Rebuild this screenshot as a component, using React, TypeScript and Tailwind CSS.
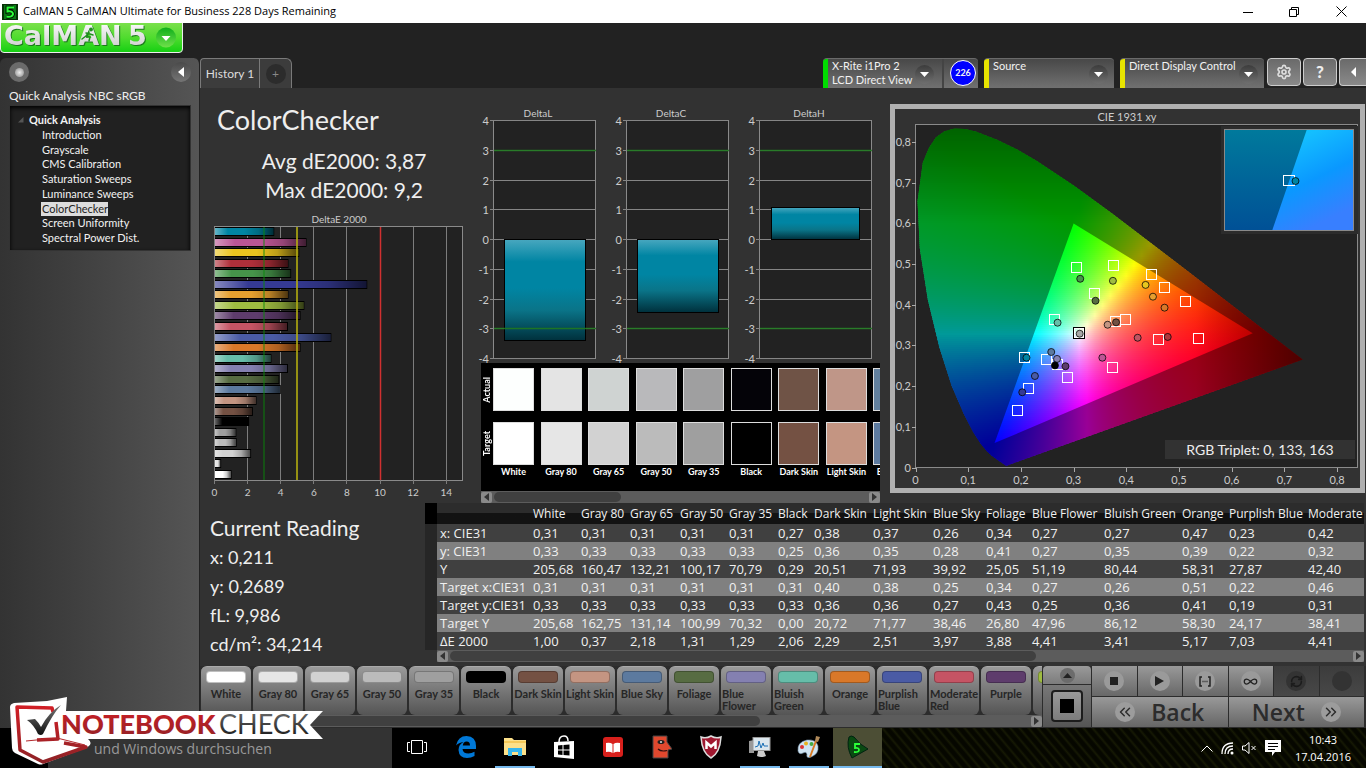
import type { ReactNode } from "react";
import clsx from "clsx";
import { ChevronsLeft, ChevronsRight, Infinity as InfinityIcon, RefreshCw, Settings } from "lucide-react";

// Workflow pages in the sidebar
const pages = [
  "Introduction",
  "Grayscale",
  "CMS Calibration",
  "Saturation Sweeps",
  "Luminance Sweeps",
  "ColorChecker",
  "Screen Uniformity",
  "Spectral Power Dist.",
];

// DeltaE per patch, top to bottom
const deltaE = [
  { color: "#0085a3", value: 3.58 },
  { color: "#bb5695", value: 5.53 },
  { color: "#eac41f", value: 5.09 },
  { color: "#af2f3a", value: 4.44 },
  { color: "#46944a", value: 4.6 },
  { color: "#353a94", value: 9.2 },
  { color: "#e6a02f", value: 4.44 },
  { color: "#9fbc41", value: 5.4 },
  { color: "#5e3c6c", value: 5.17 },
  { color: "#c55464", value: 4.41 },
  { color: "#4a5ba5", value: 7.03 },
  { color: "#d97829", value: 5.17 },
  { color: "#66bda9", value: 3.41 },
  { color: "#8480b1", value: 4.41 },
  { color: "#576c42", value: 3.88 },
  { color: "#5c7a9f", value: 3.97 },
  { color: "#c49582", value: 2.51 },
  { color: "#745143", value: 2.29 },
  { color: "#000000", value: 2.06 },
  { color: "#9f9f9f", value: 1.29 },
  { color: "#bbbbbb", value: 1.31 },
  { color: "#d2d2d2", value: 2.18 },
  { color: "#e6e6e6", value: 0.37 },
  { color: "#ffffff", value: 1.0 },
];

const swatches = [
  { name: "White", actual: "#fdfffe", target: "#ffffff" },
  { name: "Gray 80", actual: "#e4e4e4", target: "#e6e6e6" },
  { name: "Gray 65", actual: "#cfd3d2", target: "#d2d2d2" },
  { name: "Gray 50", actual: "#b9b9bb", target: "#bbbbbb" },
  { name: "Gray 35", actual: "#9f9fa0", target: "#9f9f9f" },
  { name: "Black", actual: "#040308", target: "#000000" },
  { name: "Dark Skin", actual: "#6f5346", target: "#745143" },
  { name: "Light Skin", actual: "#bf9688", target: "#c49582" },
  { name: "Blue Sky", actual: "#62809e", target: "#5c7a9f" },
];

const columns = [
  { name: "White", width: 48, values: ["0,31", "0,33", "205,68", "0,31", "0,33", "205,68", "1,00"] },
  { name: "Gray 80", width: 49, values: ["0,31", "0,33", "160,47", "0,31", "0,33", "162,75", "0,37"] },
  { name: "Gray 65", width: 50, values: ["0,31", "0,33", "132,21", "0,31", "0,33", "131,14", "2,18"] },
  { name: "Gray 50", width: 49, values: ["0,31", "0,33", "100,17", "0,31", "0,33", "100,99", "1,31"] },
  { name: "Gray 35", width: 49, values: ["0,31", "0,33", "70,79", "0,31", "0,33", "70,32", "1,29"] },
  { name: "Black", width: 36, values: ["0,27", "0,25", "0,29", "0,31", "0,33", "0,00", "2,06"] },
  { name: "Dark Skin", width: 59, values: ["0,38", "0,36", "20,51", "0,40", "0,36", "20,72", "2,29"] },
  { name: "Light Skin", width: 60, values: ["0,37", "0,35", "71,93", "0,38", "0,36", "71,77", "2,51"] },
  { name: "Blue Sky", width: 53, values: ["0,26", "0,28", "39,92", "0,25", "0,27", "38,46", "3,97"] },
  { name: "Foliage", width: 46, values: ["0,34", "0,41", "25,05", "0,34", "0,43", "26,80", "3,88"] },
  { name: "Blue Flower", width: 72, values: ["0,27", "0,27", "51,19", "0,27", "0,25", "47,96", "4,41"] },
  { name: "Bluish Green", width: 78, values: ["0,27", "0,35", "80,44", "0,26", "0,36", "86,12", "3,41"] },
  { name: "Orange", width: 47, values: ["0,47", "0,39", "58,31", "0,51", "0,41", "58,30", "5,17"] },
  { name: "Purplish Blue", width: 79, values: ["0,23", "0,22", "27,87", "0,22", "0,19", "24,17", "7,03"] },
  { name: "Moderate", width: 60, values: ["0,42", "0,32", "42,40", "0,46", "0,31", "38,41", "4,41"] },
];

const rowLabels = ["x: CIE31", "y: CIE31", "Y", "Target x:CIE31", "Target y:CIE31", "Target Y", "ΔE 2000"];

const patches = [
  { name: "White", color: "#ffffff" },
  { name: "Gray 80", color: "#e6e6e6" },
  { name: "Gray 65", color: "#d2d2d2" },
  { name: "Gray 50", color: "#bbbbbb" },
  { name: "Gray 35", color: "#9f9f9f" },
  { name: "Black", color: "#000000" },
  { name: "Dark Skin", color: "#745143" },
  { name: "Light Skin", color: "#c49582" },
  { name: "Blue Sky", color: "#5c7a9f" },
  { name: "Foliage", color: "#576c42" },
  { name: "Blue Flower", color: "#8480b1" },
  { name: "Bluish Green", color: "#66bda9" },
  { name: "Orange", color: "#d97829" },
  { name: "Purplish Blue", color: "#4a5ba5" },
  { name: "Moderate Red", color: "#c55464" },
  { name: "Purple", color: "#5e3c6c" },
  { name: "", color: "#9fbc41" },
];

// Spectral locus, CIE 1931
const locus = [
  [0.1741, 0.005], [0.1714, 0.0051], [0.1689, 0.0069], [0.1644, 0.0109], [0.1566, 0.0177],
  [0.144, 0.0297], [0.1355, 0.0399], [0.1241, 0.0578], [0.1096, 0.0868], [0.0913, 0.1327],
  [0.0687, 0.2007], [0.0454, 0.295], [0.0235, 0.4127], [0.0082, 0.5384], [0.0039, 0.6548],
  [0.0139, 0.7502], [0.0256, 0.786], [0.0389, 0.812], [0.055, 0.827], [0.0743, 0.8338],
  [0.094, 0.8325], [0.1142, 0.8262], [0.1547, 0.8059], [0.1929, 0.7816], [0.2296, 0.7543],
  [0.3016, 0.6923], [0.3731, 0.6245], [0.4441, 0.5547], [0.5125, 0.4866], [0.5752, 0.4242],
  [0.627, 0.3725], [0.6658, 0.334], [0.6915, 0.3083], [0.719, 0.2809], [0.7347, 0.2653],
];

const gamut = [[0.64, 0.33], [0.3, 0.6], [0.15, 0.06]];

const targets = [
  [0.304, 0.492], [0.374, 0.497], [0.446, 0.476], [0.472, 0.443], [0.511, 0.41], [0.338, 0.43],
  [0.262, 0.365], [0.398, 0.366], [0.378, 0.36], [0.46, 0.315], [0.536, 0.319], [0.206, 0.272],
  [0.247, 0.267], [0.268, 0.255], [0.372, 0.248], [0.288, 0.223], [0.214, 0.195], [0.192, 0.142],
];

const readings = [
  { x: 0.312, y: 0.464, color: "#46944a" },
  { x: 0.374, y: 0.459, color: "#9fbc41" },
  { x: 0.436, y: 0.449, color: "#e7c71f" },
  { x: 0.45, y: 0.42, color: "#e6a02f" },
  { x: 0.472, y: 0.393, color: "#d97829" },
  { x: 0.341, y: 0.41, color: "#576c42" },
  { x: 0.269, y: 0.356, color: "#66bda9" },
  { x: 0.364, y: 0.351, color: "#c49582" },
  { x: 0.38, y: 0.357, color: "#745143" },
  { x: 0.421, y: 0.319, color: "#c15463" },
  { x: 0.478, y: 0.321, color: "#af363c" },
  { x: 0.354, y: 0.27, color: "#bb5695" },
  { x: 0.21, y: 0.27, color: "#0085a3" },
  { x: 0.257, y: 0.284, color: "#5c7a9f" },
  { x: 0.268, y: 0.267, color: "#8480b1" },
  { x: 0.284, y: 0.249, color: "#5e3c6c" },
  { x: 0.264, y: 0.251, color: "#000000" },
  { x: 0.226, y: 0.225, color: "#4a5ba5" },
  { x: 0.202, y: 0.185, color: "#353a94" },
  { x: 0.311, y: 0.329, color: "#a8a8a8" },
];

const cieX = (x: number) => 20.5 + x * 527;
const cieY = (y: number) => 358.5 - y * 406.7;
const toPoints = (list: number[][]) => list.map(([x, y]) => `${cieX(x)},${cieY(y)}`).join(" ");
const toPath = (list: number[][]) => `M${list.map(([x, y]) => `${cieX(x)} ${cieY(y)}`).join("L")}Z`;

// Chromaticity to a fully bright rgb colour, fading out at the far red and green ends
function chromaColor(x: number, y: number) {
  const X = x / y;
  const Z = (1 - x - y) / y;
  const rgb = [
    3.2406 * X - 1.5372 - 0.4986 * Z,
    -0.9689 * X + 1.8758 + 0.0415 * Z,
    0.0557 * X - 0.204 + 1.057 * Z,
  ].map((v) => Math.max(0, v));
  const max = Math.max(...rgb);
  const fade = (1 - 2.4 * Math.max(0, x - 0.53)) * (1 - 1.5 * Math.max(0, y - 0.6));
  return `rgb(${rgb.map((v) => Math.round((v / max) * 255 * fade)).join(",")})`;
}

const cieRows = Array.from({ length: 172 }, (_, i) => {
  const top = 16 + i * 2;
  const y = Math.max(0.002, (358.5 - top - 1) / 406.7);
  const stops = Array.from({ length: 51 }, (_, s) => chromaColor((s / 50) * 0.74, y));
  return { top, stops };
});

function Scrollbar({ className, thumb }: { className?: string; thumb: string }) {
  return (
    <div className={clsx("flex h-3 items-center bg-[#5c5c5c]", className)}>
      <button aria-label="Scroll left" className="flex h-[11px] w-[11px] shrink-0 items-center justify-center rounded-xs bg-[#8a8a8a]">
        <svg width="5" height="8" viewBox="0 0 5 8"><path d="M5 0v8L0 4z" fill="#333" /></svg>
      </button>
      <div className="mx-0.5 h-[10px] flex-1">
        <div className={clsx("h-full rounded-full bg-[#404040]", thumb)} />
      </div>
      <button aria-label="Scroll right" className="flex h-[11px] w-[11px] shrink-0 items-center justify-center rounded-xs bg-[#8a8a8a]">
        <svg width="5" height="8" viewBox="0 0 5 8"><path d="M0 0v8l5-4z" fill="#333" /></svg>
      </button>
    </div>
  );
}

function TitleBar() {
  return (
    <div className="flex h-[23px] shrink-0 items-center bg-white pl-0.5 font-['Open_Sans',sans-serif] text-[11px] text-black">
      <svg width="16" height="16" viewBox="0 0 16 16">
        <rect width="16" height="16" fill="#063006" />
        <rect x="2" y="1" width="12" height="14" fill="#0a7a16" />
        <path d="M11.500 3.500H5.500v4q5-1 5.500 2.500-.5 3.500-6.500 2.500" fill="none" stroke="#010" strokeWidth="4" />
        <path d="M12 3.500H5.500v4q5-1 5.500 2.500-.5 3.500-6.500 2.500" fill="none" stroke="#2cff3a" strokeWidth="2" />
      </svg>
      <span className="flex-1 pl-[5px]">CalMAN 5 CalMAN Ultimate for Business 228 Days Remaining</span>
      <button aria-label="Minimize" className="flex h-full w-[46px] items-center justify-center">
        <svg width="10" height="10" viewBox="0 0 10 10"><path d="M0 5.500h10" stroke="#000" /></svg>
      </button>
      <button aria-label="Restore" className="flex h-full w-[46px] items-center justify-center">
        <svg width="10" height="10" viewBox="0 0 10 10" fill="none" stroke="#000"><path d="M.5 2.500h7v7h-7zM2.500 2.500v-2h7v7h-2" /></svg>
      </button>
      <button aria-label="Close" className="flex h-full w-[49px] items-center justify-center">
        <svg width="11" height="11" viewBox="0 0 11 11" fill="none" stroke="#000"><path d="M.5.5l10 10M10.500.5l-10 10" /></svg>
      </button>
    </div>
  );
}

function Logo() {
  return (
    <button aria-label="CalMAN 5 menu" className="block h-[30px] w-[183px]">
      <svg width="183" height="30" viewBox="0 0 183 30" className="overflow-visible">
        <defs>
          <linearGradient id="logoBg" x1="0" y1="0" x2="0" y2="1">
            <stop offset="0" stopColor="#7be04c" />
            <stop offset=".5" stopColor="#4fdc2e" />
            <stop offset="1" stopColor="#14cf12" />
          </linearGradient>
          <linearGradient id="silver" x1="0" y1="0" x2="0" y2="1">
            <stop offset="0" stopColor="#fff" />
            <stop offset="1" stopColor="#c9c9c9" />
          </linearGradient>
          <linearGradient id="logoBtn" x1="0" y1="0" x2="0" y2="1">
            <stop offset="0" stopColor="#0fae1b" />
            <stop offset="1" stopColor="#6fe04a" />
          </linearGradient>
        </defs>
        <path d="M.5 0v26q0 3.500 3.500 3.500h175q3.500 0 3.500-3.500V0z" fill="url(#logoBg)" />
        <path d="M.5 0v26q0 3.500 3.500 3.500h175q3.500 0 3.500-3.500V0" fill="none" stroke="#eee" />
        <g fontFamily="DejaVu Sans" fontWeight="bold" fontSize="27" fill="url(#silver)" className="drop-shadow-[1px_1px_0px_#1b7a1b]">
          <text x="4" y="22">CalMAN</text>
          <text x="128" y="22">5</text>
        </g>
        <g fill="none" stroke="#1f8f1f" strokeWidth="1.500" strokeLinecap="round">
          <circle cx="91" cy="6.500" r="1.200" fill="#1f8f1f" />
          <path d="M89 9l-3 4 4 1-1 4M86 13l-4 3M86 10l4 1 3 1" />
        </g>
        <circle cx="166" cy="14.500" r="10" fill="url(#logoBtn)" />
        <path d="M161.500 13h9l-4.500 5z" fill="#fff" />
      </svg>
    </button>
  );
}

function Sidebar() {
  return (
    <aside className="w-[200px] shrink-0 rounded-t-md border-r border-[#222] bg-linear-to-r from-[#333] to-[#555] pt-1 pr-2 pl-[9px]">
      <div className="flex items-center justify-between">
        <button aria-label="Record" className="flex h-5 w-5 items-center justify-center rounded-full bg-[#6b6b6b]">
          <span className="h-[9px] w-[9px] rounded-full bg-radial from-[#eee] to-[#888]" />
        </button>
        <button aria-label="Collapse sidebar" className="flex h-5 w-5 items-center justify-center rounded-full bg-linear-to-b from-[#4a4a4a] to-[#757575]">
          <svg width="6" height="10" viewBox="0 0 6 10"><path d="M6 0v10L0 5z" fill="#fff" /></svg>
        </button>
      </div>
      <p className="mt-[5px] text-[12px] leading-[18px] text-[#eee]">Quick Analysis NBC sRGB</p>
      <nav className="h-[146px] border border-[#333] bg-[#212121] pt-1.5 text-[11px] text-[#f2f2f2] inset-shadow-sm inset-shadow-black">
        <p className="flex items-center gap-[5px] pl-2 leading-[16px] font-bold">
          <svg width="6" height="6" viewBox="0 0 6 6"><path d="M5.500 0v5.500H0z" fill="#555" /></svg>
          Quick Analysis
        </p>
        <ul className="flex h-[117px] flex-col justify-between pl-8">
          {pages.map((page) => (
            <li key={page} className="leading-[14px]">
              <a href="#" className={clsx(page === "ColorChecker" && "-ml-px inline-block bg-[#dcdcdc] pl-px text-[#222]")}>
                {page}
              </a>
            </li>
          ))}
        </ul>
      </nav>
    </aside>
  );
}

function RoundArrow() {
  return (
    <span className="mt-1.5 flex h-[19px] w-[19px] shrink-0 items-center justify-center rounded-full bg-linear-to-b from-[#3c3c3c] to-[#707070]">
      <svg width="9" height="5" viewBox="0 0 9 5"><path d="M0 0h9L4.500 5z" fill="#fff" /></svg>
    </span>
  );
}

function TopBar() {
  const tab = "flex h-[30px] shrink-0 overflow-hidden rounded-t border-t border-[#6a6a6a] bg-linear-to-b from-[#484848] to-[#717171] text-left text-[11px] leading-[14px] whitespace-nowrap text-[#f2f2f2]";
  const tool = "flex h-[28px] w-[34px] items-center justify-center rounded border border-[#ccc] bg-linear-to-b from-[#6a6a6a] to-[#8a8a8a]";
  return (
    <div className="flex h-[30px] shrink-0 items-end bg-[#222]">
      <button className="h-[30px] w-[59px] rounded-tl border-t border-l border-[#7a7a7a] bg-[#3c3c3c] text-[12px] text-[#ddd]">
        History 1
      </button>
      <button aria-label="Add history" className="flex h-[30px] w-[33px] items-center justify-center rounded-tr-md border border-b-0 border-[#7a7a7a] bg-[#3c3c3c]">
        <span className="flex h-5 w-5 items-center justify-center rounded-full bg-[#2c2c2c] text-[12px] text-[#888]">+</span>
      </button>
      <div className="flex-1" />
      <button className={clsx(tab, "w-[155px]")}>
        <span className="h-full w-[5px] bg-[#00dd00]" />
        <span className="flex-1 pl-1">X-Rite i1Pro 2<br />LCD Direct View</span>
        <RoundArrow />
        <span className="mr-1.5 ml-2 h-full border-l-2 border-[#444]" />
        <span className="mt-px mr-0.5 flex h-[26px] w-[26px] shrink-0 items-center justify-center rounded-full border border-white bg-[#0000ff] text-[9px] font-bold">226</span>
      </button>
      <button className={clsx(tab, "ml-1.5 w-[130px] pr-1.5")}>
        <span className="h-full w-[5px] bg-[#e8e400]" />
        <span className="flex-1 pl-1">Source</span>
        <RoundArrow />
      </button>
      <button className={clsx(tab, "ml-1.5 w-[144px] pr-1.5")}>
        <span className="h-full w-[5px] bg-[#e8e400]" />
        <span className="flex-1 pl-1">Direct Display Control</span>
        <RoundArrow />
      </button>
      <div className="ml-[3px] flex gap-0.5 self-start">
        <button aria-label="Settings" className={tool}>
          <Settings size={16} color="#ddd" strokeWidth={2.5} />
        </button>
        <button aria-label="Help" className={clsx(tool, "text-[17px] font-black text-[#eee]")}>?</button>
        <button aria-label="Collapse" className="flex h-[28px] w-[27px] items-center justify-center rounded-l border border-r-0 border-[#ccc] bg-linear-to-b from-[#6a6a6a] to-[#8a8a8a]">
          <svg width="5" height="10" viewBox="0 0 5 10"><path d="M5 0v10L0 5z" fill="#fff" /></svg>
        </button>
      </div>
    </div>
  );
}

function DeltaEChart() {
  const unit = 16.55;
  return (
    <svg width="264" height="290" viewBox="0 0 264 290" fontFamily="Lato" className="text-[10px]">
      <defs>
        <linearGradient id="shadeH">
          <stop offset="0" stopColor="#fff" stopOpacity=".4" />
          <stop offset=".22" stopColor="#fff" stopOpacity="0" />
          <stop offset=".5" stopColor="#000" stopOpacity="0" />
          <stop offset=".75" stopColor="#000" stopOpacity=".2" />
          <stop offset="1" stopColor="#000" stopOpacity=".65" />
        </linearGradient>
      </defs>
      <text x="131" y="13" textAnchor="middle" fill="#ccc">DeltaE 2000</text>
      <rect x="6.500" y="16.500" width="248" height="254" fill="#222" stroke="#8a8a8a" />
      {[0, 2, 4, 6, 8, 10, 12, 14].map((v) => (
        <g key={v}>
          <path d={`M${Math.round(v * unit) + 6.5} 17v257`} stroke="#7d7d7d" />
          <text x={v * unit + 6.5} y="286" textAnchor="middle" fill="#ccc">{v}</text>
        </g>
      ))}
      {deltaE.map((bar, i) => (
        <g key={i} transform={`translate(7 ${Math.round(17 + i * 10.56)})`}>
          <rect width={bar.value * unit} height="9" fill="#000" />
          <rect y="1" width={bar.value * unit - 1} height="7" fill={bar.color} />
          <rect y="1" width={bar.value * unit - 1} height="7" fill="url(#shadeH)" />
        </g>
      ))}
      <path d="M56 17v253" stroke="#0a8a0a" strokeOpacity=".6" strokeWidth="1.500" />
      <path d="M89 17v253" stroke="#b4ae10" strokeOpacity=".8" strokeWidth="2" />
      <path d="M172.500 17v253" stroke="#d03030" strokeWidth="1.500" />
    </svg>
  );
}

type DeltaChartProps = { title: string; value: number; plot: number; width: number };

function DeltaChart({ title, value, plot, width }: DeltaChartProps) {
  const y = (v: number) => Math.round((4 - v) * 29.75) + 16.5;
  const top = value > 0 ? y(value) : y(0);
  const height = Math.abs(y(value) - y(0));
  return (
    <svg width={width} height="259" viewBox={`0 0 ${width} 259`} fontFamily="Lato" className="overflow-visible text-[11px]">
      <defs>
        <linearGradient id="shadeV" x1="0" y1="0" x2="0" y2="1">
          <stop offset="0" stopColor="#48a7bf" />
          <stop offset=".22" stopColor="#0085a3" />
          <stop offset=".48" stopColor="#0085a3" />
          <stop offset=".7" stopColor="#0a7488" />
          <stop offset="1" stopColor="#00303c" />
        </linearGradient>
      </defs>
      <text x={13 + plot / 2 - 6} y="13" textAnchor="middle" fontSize="10" fill="#ccc">{title}</text>
      <rect x="13.500" y="16.500" width={plot} height="238" fill="#222" stroke="#8a8a8a" />
      {[4, 3, 2, 1, 0, -1, -2, -3, -4].map((v) => (
        <g key={v}>
          <path d={`M10 ${y(v)}h${plot + 3}`} stroke="#858585" />
          <text x="9" y={y(v) + 4} textAnchor="end" fill="#ccc">{v}</text>
        </g>
      ))}
      <rect
        x={13.5 + Math.round(plot * 0.105)}
        y={top}
        width={Math.round(plot * 0.79)}
        height={height}
        fill="url(#shadeV)"
        stroke="#000"
      />
      {[3, -3].map((v) => (
        <path key={v} d={`M14 ${y(v)}h${plot}`} stroke="#1f7a1f" strokeWidth="1.500" strokeOpacity=".9" />
      ))}
    </svg>
  );
}

function SwatchPanel() {
  const side = "flex w-3 items-center justify-center text-[9px] font-bold text-white";
  return (
    <div className="ml-px w-[399px]">
      <div className="grid h-[128px] grid-cols-[12px_1fr] grid-rows-[54px_74px] overflow-hidden bg-black">
        <div className={side}><span className="rotate-180 [writing-mode:vertical-rl]">Actual</span></div>
        <div className="grid w-[428px] grid-cols-9 pt-[5px]">
          {swatches.map((s) => (
            <div key={s.name} className="h-[43px] w-[41px] border border-[#ddd]" style={{ backgroundColor: s.actual }} />
          ))}
        </div>
        <div className={clsx(side, "pb-5")}><span className="rotate-180 [writing-mode:vertical-rl]">Target</span></div>
        <div className="grid w-[428px] grid-cols-9 pt-[5px]">
          {swatches.map((s) => (
            <div key={s.name} className="w-[41px]">
              <div className="h-[43px] border border-[#ddd]" style={{ backgroundColor: s.target }} />
              <p className="-mx-1 text-center text-[9px] leading-[14px] font-bold whitespace-nowrap text-white">{s.name}</p>
            </div>
          ))}
        </div>
      </div>
      <Scrollbar thumb="w-[34%]" />
    </div>
  );
}

function CieChart() {
  const edge = toPath(locus);
  const triangle = toPath(gamut);
  return (
    <svg viewBox="0 0 465 379" className="h-full w-full text-[11px]" fontFamily="Lato">
      <defs>
        {cieRows.map((row) => (
          <linearGradient key={row.top} id={`cie${row.top}`}>
            {row.stops.map((color, i) => (
              <stop key={i} offset={i / 50} stopColor={color} />
            ))}
          </linearGradient>
        ))}
        <clipPath id="locus"><polygon points={toPoints(locus)} /></clipPath>
        <linearGradient id="insetDark" x1="0" y1="0" x2="0" y2="1">
          <stop offset="0" stopColor="#007a9c" />
          <stop offset="1" stopColor="#005096" />
        </linearGradient>
        <linearGradient id="insetLight" x1="0" y1="0" x2=".4" y2="1">
          <stop offset="0" stopColor="#00cfff" />
          <stop offset=".2" stopColor="#14beff" />
          <stop offset=".6" stopColor="#0a98ff" />
          <stop offset="1" stopColor="#387fff" />
        </linearGradient>
      </defs>
      <text x="232" y="12" textAnchor="middle" fill="#ccc">CIE 1931 xy</text>
      <rect x="20.500" y="15.500" width="442" height="343" fill="#222" stroke="#8a8a8a" />
      <g clipPath="url(#locus)">
        {cieRows.map((row) => (
          <rect key={row.top} x={cieX(0)} y={row.top} width={0.74 * 527} height="2.500" fill={`url(#cie${row.top})`} />
        ))}
      </g>
      <path d={edge + triangle} fillRule="evenodd" fill="#000" fillOpacity=".4" />
      {[0, 1, 2, 3, 4, 5, 6, 7, 8].map((v) => (
        <g key={v} fill="#ccc" stroke="none">
          <path d={`M${Math.round(cieX(v / 10)) + 0.5} 359v4M17 ${Math.round(cieY(v / 10)) + 0.5}h4`} stroke="#aaa" />
          <text x={cieX(v / 10)} y="375" textAnchor="middle">{v ? `0,${v}` : "0"}</text>
          <text x="16" y={cieY(v / 10) + 4} textAnchor="end">{v ? `0,${v}` : "0"}</text>
        </g>
      ))}
      {targets.map(([x, y], i) => (
        <rect key={i} x={Math.round(cieX(x)) - 4.5} y={Math.round(cieY(y)) - 4.5} width="10" height="10" fill="none" stroke="#fff" />
      ))}
      <rect x={Math.round(cieX(0.31)) - 5.5} y={Math.round(cieY(0.331)) - 5.5} width="11" height="11" fill="none" stroke="#000" />
      <rect x={Math.round(cieX(0.31)) - 4.5} y={Math.round(cieY(0.331)) - 4.5} width="9" height="9" fill="none" stroke="#fff" />
      {readings.map((r) => (
        <circle key={r.color} cx={cieX(r.x) + 0.3} cy={cieY(r.y)} r="3.500" fill={r.color} stroke="#000" strokeOpacity=".75" />
      ))}
      {/* zoomed view of the selected patch */}
      <rect x="326" y="17" width="137" height="108" fill="#2c2c2c" />
      <rect x="329" y="20" width="130" height="102" fill="url(#insetDark)" />
      <path d="M412 20h47v102h-82z" fill="url(#insetLight)" />
      <rect x="329.500" y="20.500" width="129" height="101" fill="none" stroke="#8a8a8a" />
      <rect x="388.500" y="66.500" width="11" height="10" fill="none" stroke="#fff" />
      <circle cx="400.500" cy="72" r="3.500" fill="#0085a3" stroke="#000" strokeOpacity=".75" />
      <rect x="270" y="331" width="190" height="19" fill="#323232" />
      <text x="365" y="346" textAnchor="middle" fontSize="14" fill="#eee">RGB Triplet: 0, 133, 163</text>
    </svg>
  );
}

function CurrentReading() {
  return (
    <section className="w-[225px] shrink-0 pt-2.5 pl-2.5 text-[#eee]">
      <h2 className="text-[21px] leading-[30px]">Current Reading</h2>
      <div className="text-[18px] leading-[29px]">
        <p>x: 0,211</p>
        <p>y: 0,2689</p>
        <p>fL: 9,986</p>
        <p>cd/m²: 34,214</p>
      </div>
    </section>
  );
}

function DataTable() {
  return (
    <section className="mr-0.5 min-w-0 flex-1 overflow-hidden">
      <table className="w-[940px] table-fixed font-['Open_Sans',sans-serif] text-[13px] text-[#f0f0f0]">
        <colgroup>
          <col className="w-3" />
          <col className="w-[93px]" />
          {columns.map((c) => (
            <col key={c.name} style={{ width: c.width }} />
          ))}
        </colgroup>
        <thead>
          <tr className="h-[21px] bg-linear-to-b from-[#2c2c2c] from-50% to-[#121212] to-50% text-left text-[12px] leading-[18px]">
            <td className="bg-black" />
            <td />
            {columns.map((c) => (
              <th key={c.name} scope="col" className="pl-[3px] font-normal whitespace-nowrap">{c.name}</th>
            ))}
          </tr>
        </thead>
        <tbody>
          {rowLabels.map((label, i) => (
            <tr key={label} className={clsx("leading-[18px]", i % 2 ? "bg-[#808080]" : "bg-[#404040]")}>
              <td className="bg-[#262626]" />
              <th scope="row" className="pl-[3px] text-left font-normal whitespace-nowrap">{label}</th>
              {columns.map((c) => (
                <td key={c.name} className="pl-[3px]">{c.values[i]}</td>
              ))}
            </tr>
          ))}
        </tbody>
      </table>
      <Scrollbar className="ml-3" thumb="w-[65%]" />
    </section>
  );
}

function PatchStrip() {
  return (
    <div className="min-w-0 flex-1 overflow-hidden">
      <div className="flex h-[49px] gap-0.5 pl-px">
        {patches.map((p) => (
          <button
            key={p.color}
            aria-label={p.name || "Yellow Green"}
            className="flex w-[50px] shrink-0 flex-col items-center rounded-md border-t border-[#aaa] bg-linear-to-b from-[#9a9a9a] to-[#555] pt-1 text-left text-[11px] leading-[12px] font-bold text-[#262626]"
          >
            <span className="h-3 w-10 shrink-0 rounded border border-black/25" style={{ backgroundColor: p.color }} />
            <span className={clsx("mt-[5px]", p.name.length > 10 && "max-w-12")}>{p.name}</span>
          </button>
        ))}
      </div>
      <Scrollbar thumb="w-[67%]" />
    </div>
  );
}

function ControlCell({ label, off, children }: { label: string; off?: boolean; children?: ReactNode }) {
  return (
    <button
      aria-label={label}
      className={clsx(
        "flex flex-1 items-center justify-center",
        off ? "bg-linear-to-b from-[#3c3c3c] to-[#484848]" : "bg-linear-to-b from-[#999] to-[#686868]",
      )}
    >
      <span className={clsx("flex h-5 w-5 items-center justify-center rounded-full", off ? "bg-[#333]" : "bg-[#9a9a9a]")}>
        {children}
      </span>
    </button>
  );
}

function BottomBar() {
  const big = "flex flex-1 items-center justify-center gap-4 bg-linear-to-b from-[#999] to-[#666] font-['Open_Sans',sans-serif] text-[23px] font-semibold text-[#2c2c2c]";
  return (
    <footer className="flex h-[62px] shrink-0 bg-[#2c2c2c] pb-px">
      <PatchStrip />
      <div className="ml-px flex w-12 flex-col gap-px">
        <button aria-label="Expand" className="flex h-[18px] items-center justify-center rounded-t bg-linear-to-b from-[#9a9a9a] to-[#7c7c7c]">
          <span className="flex h-[15px] w-[15px] items-center justify-center rounded-full bg-[#6c6c6c]">
            <svg width="9" height="5" viewBox="0 0 9 5"><path d="M0 5h9L4.500 0z" fill="#222" /></svg>
          </span>
        </button>
        <button aria-label="Pattern window" className="flex flex-1 items-center justify-center bg-linear-to-b from-[#787878] to-[#555]">
          <span className="flex h-8 w-8 items-center justify-center rounded border-2 border-[#1c1c1c] bg-linear-to-b from-[#999] to-[#7c7c7c]">
            <span className="h-3.5 w-3.5 bg-black" />
          </span>
        </button>
      </div>
      <div className="mr-0.5 ml-px flex w-[272px] flex-col gap-px">
        <div className="flex h-[30px] gap-px">
          <ControlCell label="Stop"><span className="h-2 w-2 bg-[#222]" /></ControlCell>
          <ControlCell label="Play">
            <svg width="9" height="10" viewBox="0 0 9 10"><path d="M0 0v10l9-5z" fill="#222" /></svg>
          </ControlCell>
          <ControlCell label="Read series">
            <svg width="12" height="11" viewBox="0 0 12 11" fill="none" stroke="#222" strokeWidth="1.500"><path d="M3 1H1v9h2M9 1h2v9H9M3.500 5.500h1M5.500 5.500h1M7.500 5.500h1" /></svg>
          </ControlCell>
          <ControlCell label="Read continuously"><InfinityIcon size={15} color="#222" /></ControlCell>
          <ControlCell label="Refresh" off><RefreshCw size={13} color="#1c1c1c" strokeWidth={3} /></ControlCell>
          <ControlCell label="Record" off />
        </div>
        <div className="flex min-h-0 flex-1 gap-px">
          <button className={big}>
            <span className="flex h-5 w-5 items-center justify-center rounded-full bg-[#9c9c9c]"><ChevronsLeft size={18} /></span>
            Back
          </button>
          <button className={big}>
            Next
            <span className="flex h-5 w-5 items-center justify-center rounded-full bg-[#9c9c9c]"><ChevronsRight size={18} /></span>
          </button>
        </div>
      </div>
    </footer>
  );
}

function Watermark() {
  return (
    <svg width="316" height="70" viewBox="0 0 316 70" className="absolute bottom-0.5 left-2.5">
      <defs>
        <linearGradient id="nbRed" x1="0" y1="0" x2="0" y2="1">
          <stop offset="0" stopColor="#d01f26" />
          <stop offset="1" stopColor="#8f2226" />
        </linearGradient>
        <linearGradient id="nbGray" x1="0" y1="0" x2="0" y2="1">
          <stop offset="0" stopColor="#777" />
          <stop offset="1" stopColor="#111" />
        </linearGradient>
      </defs>
      <path d="M4 7l33-2L57 1l-1 14h257l-13 14 13 14H78q6 5-2 9L33 68q-2 1-5 0L5 57q-3-2-3-5L0 11q0-3 4-4z" fill="#fff" />
      <path d="M43 16l-1-4-35-1 3 43 23 12 43-15-22-4M46 26l2 17-21 1" fill="none" stroke="url(#nbRed)" strokeWidth="3.500" strokeLinejoin="round" />
      <path d="M16 45l31-3 28 7" fill="none" stroke="#b3262b" strokeWidth="1" />
      <path d="M17 24l8-1q4 4 6 8Q39 16 51 9q-9 10-18 29-2 2-5 0-4-9-11-14z" fill="url(#nbGray)" />
      <text x="51" y="38" fontFamily="Lato" fontSize="27" fontWeight="900" fill="url(#nbRed)">NOTEBOOK</text>
      <text x="209" y="38" fontFamily="Lato" fontSize="27" fontWeight="400" fill="url(#nbGray)">CHECK</text>
    </svg>
  );
}

function TaskItem({ label, open, active, children }: { label: string; open?: boolean; active?: boolean; children: ReactNode }) {
  return (
    <button aria-label={label} className={clsx("flex w-[49px] flex-col items-center", active && "bg-[#4c4e35]")}>
      <span className="flex flex-1 items-center">{children}</span>
      <span className={clsx("h-0.5", active ? "w-full" : "w-10", open && "bg-[#76b9ed]")} />
    </button>
  );
}

function TaskBar() {
  return (
    <div className="relative flex h-10 shrink-0 bg-black font-['Open_Sans',sans-serif]">
      <div className="w-12" />
      <label className="flex w-[344px] bg-[#333]">
        <span className="sr-only">Search</span>
        <input className="w-full bg-transparent pl-[46px] text-[14px] text-[#999] outline-none" defaultValue="und Windows durchsuchen" />
      </label>
      <TaskItem label="Task view">
        <svg width="20" height="14" viewBox="0 0 20 14" fill="none" stroke="#fff"><path d="M4.500.5h11v13h-11zM3 2.500H.5v9H3M17 2.500h2.500v9H17" /></svg>
      </TaskItem>
      <TaskItem label="Edge">
        <svg width="20" height="22" viewBox="0 0 20 22">
          <path d="M0 9.500Q2 0 10.500 0 20 .5 20 10v3H6.500q.5 4.500 6 4.500 3 0 6-1.700V20q-3.500 2-7.500 2-8 0-8.500-8 0-5.500 5-8Q2.500 6.500 0 9.500zM6.800 9.500h7.200q0-4-3.300-4-3.400 0-3.900 4z" fill="#0078d7" fillRule="evenodd" />
        </svg>
      </TaskItem>
      <TaskItem label="Explorer" open>
        <svg width="22" height="20" viewBox="0 0 22 20">
          <path d="M0 1h8l2 2h12v15H0z" fill="#fce08a" />
          <path d="M0 4h22v2H0z" fill="#f5c95a" />
          <path d="M4 11h14v8h-4v-4H8v4H4z" fill="#35b6ee" />
        </svg>
      </TaskItem>
      <TaskItem label="Store">
        <svg width="22" height="24" viewBox="0 0 22 24">
          <path d="M1 7l20-1v18L1 22z" fill="#fff" />
          <path d="M6 7q0-6 5-6 4 0 4 5" fill="none" stroke="#fff" strokeWidth="1.500" />
          <path d="M5 10.500l4.500-.5v4.500H5zM10.500 10l6-.5v5h-6zM5 15.500h4.500V20L5 19.500zM10.500 15.500h6v5l-6-.5z" fill="#000" />
        </svg>
      </TaskItem>
      <TaskItem label="Reader">
        <svg width="20" height="20" viewBox="0 0 20 20">
          <rect width="20" height="20" rx="3" fill="#d8201c" />
          <path d="M3 6q4-1 6.500 1v9Q7 14 3 15zM17 6q-4-1-6.500 1v9Q13 14 17 15z" fill="#fff" />
        </svg>
      </TaskItem>
      <TaskItem label="Xodo">
        <svg width="20" height="24" viewBox="0 0 20 24">
          <path d="M1 1h14v6l5 7-4 1v8H1z" fill="#e0482e" stroke="#444" />
          <path d="M6 14q3 3 9 1.500" fill="none" stroke="#301010" strokeWidth="1.200" />
          <ellipse cx="9" cy="7" rx="3.500" ry="2" fill="#222" />
          <circle cx="9" cy="7" r="1" fill="#ddd" />
        </svg>
      </TaskItem>
      <TaskItem label="McAfee">
        <svg width="22" height="24" viewBox="0 0 22 24">
          <path d="M11 1q5 3 10 1-1 16-10 21Q2 18 1 2q5 2 10-1z" fill="#a01830" stroke="#ddd" strokeWidth="1.500" />
          <path d="M6.500 14V7.500l4.500 4 4.500-4V14" fill="none" stroke="#fff" strokeWidth="2.500" />
        </svg>
      </TaskItem>
      <TaskItem label="Monitor" open>
        <svg width="23" height="22" viewBox="0 0 23 22">
          <path d="M1 5l5-1v13H1z" fill="#999" />
          <rect x="5" y="1.500" width="17" height="13" fill="#dbe7ee" stroke="#999" />
          <path d="M7 11l3-1 1-5 2 7 2-5 1 3h4" fill="none" stroke="#1a6fb5" />
          <path d="M10 15h6l2 5q-5 2-9 0z" fill="#ccc" />
        </svg>
      </TaskItem>
      <TaskItem label="Paint" open>
        <svg width="24" height="24" viewBox="0 0 24 24">
          <path d="M1 16Q0 7 10 5q9-1 11 6 1 8-7 11-5 2-4-3-1-3-4-1-4 2-5-2z" fill="#cfe3f2" stroke="#7895ad" strokeWidth=".6" />
          <circle cx="5" cy="12" r="2" fill="#d33" />
          <circle cx="9" cy="8.500" r="2" fill="#e7b21d" />
          <circle cx="14.500" cy="9" r="2" fill="#4a4" />
          <path d="M13 22L19 6" stroke="#d87a22" strokeWidth="2" />
          <path d="M18 6l1-5 4 1-2 5z" fill="#b08a5a" />
        </svg>
      </TaskItem>
      <TaskItem label="CalMAN" open active>
        <svg width="22" height="24" viewBox="0 0 22 24">
          <path d="M2 2q-3 10 3 21l16-9Q13 10 7 2q-3-2-5 0z" fill="#0a4a12" stroke="#021" />
          <path d="M13 9H8v4q4-.5 4 2t-5 2" fill="none" stroke="#2cff3a" strokeWidth="1.800" />
        </svg>
      </TaskItem>
      <div className="flex flex-1 items-center justify-end gap-2 bg-[repeating-linear-gradient(50deg,#060700_0px,#060700_3px,#161904_5px,#060700_7px)] pr-[15px] text-[11px] leading-[17px] text-white">
        <svg width="12" height="7" viewBox="0 0 12 7" fill="none" stroke="#fff"><path d="M.5 6.500L6 1l5.500 5.500" /></svg>
        <svg width="13" height="13" viewBox="0 0 13 13" fill="none" stroke="#fff">
          <path d="M1 12Q1 1 12 1M4 12q0-8 8-8M7 12q0-5 5-5" strokeWidth="1.300" />
          <circle cx="11" cy="11" r="1.500" fill="#fff" stroke="none" />
        </svg>
        <svg width="15" height="12" viewBox="0 0 15 12" fill="none" stroke="#fff"><path d="M.5 4v4H3l4 3.500V.5L3 4zM9.500 4l4 4M13.500 4l-4 4" /></svg>
        <svg width="16" height="16" viewBox="0 0 16 16">
          <path d="M0 0h16v12h-6l-3 4v-4H0z" fill="#fff" />
          <path d="M3 3.500h10M3 6.500h10M3 9.500h7" stroke="#000" />
        </svg>
        <time className="pl-1.5 text-center">10:43<br />17.04.2016</time>
      </div>
      <Watermark />
    </div>
  );
}

export default function App() {
  return (
    <div className="flex min-h-screen flex-col overflow-hidden bg-[#222] font-['Lato',sans-serif]">
      <TitleBar />
      <header className="h-[35px] shrink-0">
        <Logo />
      </header>
      <div className="flex flex-1">
        <Sidebar />
        <main className="flex min-w-0 flex-1 flex-col bg-[#323232]">
          <TopBar />
          <div className="flex h-[415px]">
            <section className="w-[280px] shrink-0 text-[#eee]">
              <h1 className="pt-3.5 pl-[17px] text-[27px] leading-[36px]">ColorChecker</h1>
              <div className="pt-2 pl-2 text-center text-[21px] leading-[29px]">
                <p>Avg dE2000: 3,87</p>
                <p>Max dE2000: 9,2</p>
              </div>
              <div className="pt-1.5 pl-2">
                <DeltaEChart />
              </div>
            </section>
            <section className="w-[405px] shrink-0 pt-4">
              <div className="flex">
                <DeltaChart title="DeltaL" value={-3.4} plot={102} width={133} />
                <DeltaChart title="DeltaC" value={-2.45} plot={102} width={133} />
                <DeltaChart title="DeltaH" value={1.07} plot={112} width={139} />
              </div>
              <SwatchPanel />
            </section>
            <section className="mt-4 mr-px ml-[5px] h-[389px] min-w-0 flex-1 border-[5px] border-[#b0b0b0]">
              <CieChart />
            </section>
          </div>
          <div className="flex flex-1">
            <CurrentReading />
            <DataTable />
          </div>
          <BottomBar />
        </main>
      </div>
      <TaskBar />
    </div>
  );
}
